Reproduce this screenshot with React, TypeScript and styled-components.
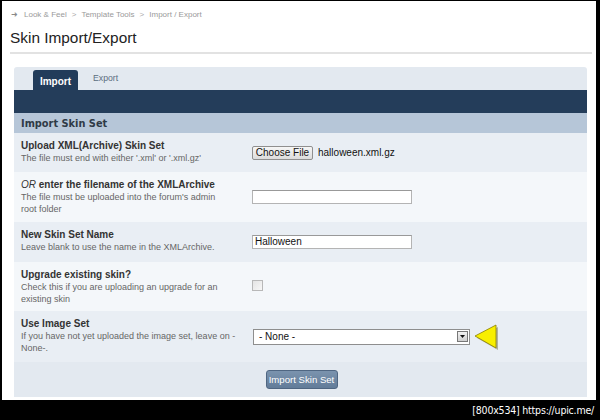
import React from "react";
import styled, { createGlobalStyle } from "styled-components";

const Global = createGlobalStyle`
  html, body { margin: 0; padding: 0; background: #000; }
  #root { width: 600px; height: 420px; }
`;

const Shot = styled.div`
  width: 600px;
  height: 420px;
  background: #000;
  display: flex;
  flex-direction: column;
  overflow: hidden;
`;

const Page = styled.div`
  margin: 1px 4px 0 2px;
  height: 399px;
  background: #fff;
  display: flex;
  flex-direction: column;
  font-family: "Liberation Sans", Arial, sans-serif;
`;

const Breadcrumb = styled.div`
  display: flex;
  align-items: center;
  gap: 5px;
  padding: 8px 0 0 9px;
  height: 10px;
  font-size: 8px;
  color: #9a9a9a;
`;

const Arrow = styled.span`
  font-size: 8px;
  color: #8a8a8a;
  margin-right: 1px;
`;

const Sep = styled.span`
  color: #aaa;
`;

const Title = styled.h1`
  margin: 10px 0 0 8px;
  font-size: 15.4px;
  font-weight: normal;
  color: #222;
  line-height: 18px;
`;

const Rule = styled.div`
  margin: 5px 4px 0 8px;
  height: 2px;
  background: #e2e2e2;
`;

const Panel = styled.div`
  margin: 13px 9px 0 12px;
  display: flex;
  flex-direction: column;
`;

const TabStrip = styled.div`
  height: 23px;
  background: #e3e9f0;
  border-radius: 3px 3px 0 0;
  display: flex;
  align-items: flex-end;
  padding-left: 19px;
`;

const ActiveTab = styled.div`
  width: 45px;
  height: 20px;
  background: #223c5a;
  border-radius: 3px 3px 0 0;
  color: #fff;
  font-weight: bold;
  font-size: 10px;
  display: flex;
  align-items: center;
  justify-content: center;
  padding-top: 2px;
  box-sizing: border-box;
`;

const Tab = styled.div`
  margin-left: 15px;
  height: 20px;
  font-size: 8.7px;
  color: #5b6d80;
  display: flex;
  align-items: center;
  padding-bottom: 5px;
  box-sizing: border-box;
`;

const DarkBar = styled.div`
  height: 23px;
  background: #243d5a;
`;

const SectionHeader = styled.div`
  height: 20px;
  background: #b6c6d8;
  padding-left: 7px;
  display: flex;
  align-items: center;
  font-family: "DejaVu Sans", Verdana, sans-serif;
  font-weight: bold;
  font-size: 9.8px;
  color: #2f3a46;
`;

const Row = styled.div<{ $alt?: boolean; $h: number }>`
  display: grid;
  grid-template-columns: 238px 1fr;
  height: ${(p) => p.$h}px;
  background: ${(p) => (p.$alt ? "#f4f7fa" : "#e9eef4")};
`;

const LabelCell = styled.div`
  padding: 7px 19px 0 7px;
  display: flex;
  flex-direction: column;
`;

const Label = styled.div`
  font-size: 10px;
  font-weight: bold;
  line-height: 12px;
  color: #333;
  em {
    font-weight: normal;
  }
`;

const Desc = styled.div`
  font-size: 9px;
  line-height: 12px;
  color: #666;
`;

const DescLine = styled.span`
  display: block;
  white-space: nowrap;
`;

const ControlCell = styled.div`
  display: flex;
  align-items: center;
`;

const FileButton = styled.button`
  height: 14px;
  width: 61px;
  padding: 0;
  border: 1px solid #8f8f8f;
  border-radius: 2px;
  background: linear-gradient(#f6f6f6, #dcdcdc);
  font-family: "Liberation Sans", Arial, sans-serif;
  font-size: 10px;
  color: #111;
  line-height: 12px;
`;

const FileName = styled.span`
  margin-left: 5px;
  font-size: 10px;
  color: #111;
`;

const TextBox = styled.div`
  width: 160px;
  height: 14px;
  box-sizing: border-box;
  border: 1px solid #b4b4b4;
  border-top-color: #999;
  background: #fff;
  font-size: 10px;
  line-height: 12px;
  padding-left: 2px;
  color: #111;
`;

const CheckBox = styled.div`
  width: 9px;
  height: 9px;
  margin-top: -2px;
  border: 1px solid #b8b8b8;
  background: linear-gradient(135deg, #e4e4e4, #f7f7f7);
`;

const Select = styled.div`
  width: 217px;
  height: 16px;
  box-sizing: border-box;
  border: 1px solid #8e8e8e;
  background: #fff;
  display: flex;
  align-items: center;
  justify-content: space-between;
  padding: 0 1px 0 5px;
  font-size: 10px;
  color: #111;
  margin-left: 1px;
`;

const DropButton = styled.div`
  width: 11px;
  height: 11px;
  box-sizing: border-box;
  border: 1px solid #777;
  background: linear-gradient(#f2f2f2, #cfcfcf);
  display: flex;
  align-items: center;
  justify-content: center;
`;

const Pointer = styled.svg`
  margin-left: 4px;
  margin-top: 2px;
`;

const Footer = styled.div`
  height: 35px;
  background: #e3e9f0;
  display: flex;
  align-items: center;
  justify-content: center;
`;

const SubmitButton = styled.button`
  width: 72px;
  height: 19px;
  padding: 0;
  margin-left: 2px;
  border: 1px solid #4f6682;
  border-radius: 3px;
  background: linear-gradient(#7b93ae, #627c99);
  color: #fff;
  font-family: "Liberation Sans", Arial, sans-serif;
  font-size: 9.6px;
`;

const Caption = styled.div`
  flex: 1;
  display: flex;
  align-items: center;
  justify-content: flex-end;
  padding-right: 6px;
  color: #fff;
  font-family: "DejaVu Sans", sans-serif;
  font-stretch: condensed;
  font-size: 10.5px;
  letter-spacing: -0.2px;
`;

export default function App() {
  return (
    <>
      <Global />
      <Shot>
        <Page>
          <Breadcrumb>
            <Arrow>➜</Arrow>
            <span>Look &amp; Feel</span>
            <Sep>&gt;</Sep>
            <span>Template Tools</span>
            <Sep>&gt;</Sep>
            <span>Import / Export</span>
          </Breadcrumb>
          <Title>Skin Import/Export</Title>
          <Rule />
          <Panel>
            <TabStrip>
              <ActiveTab>Import</ActiveTab>
              <Tab>Export</Tab>
            </TabStrip>
            <DarkBar />
            <SectionHeader>Import Skin Set</SectionHeader>
            <Row $h={39}>
              <LabelCell>
                <Label>Upload XML(Archive) Skin Set</Label>
                <Desc>The file must end with either '.xml' or '.xml.gz'</Desc>
              </LabelCell>
              <ControlCell>
                <FileButton>Choose File</FileButton>
                <FileName>halloween.xml.gz</FileName>
              </ControlCell>
            </Row>
            <Row $alt $h={50}>
              <LabelCell>
                <Label>
                  <em>OR</em> enter the filename of the XMLArchive
                </Label>
                <Desc>The file must be uploaded into the forum's admin root folder</Desc>
              </LabelCell>
              <ControlCell>
                <TextBox />
              </ControlCell>
            </Row>
            <Row $h={40}>
              <LabelCell>
                <Label>New Skin Set Name</Label>
                <Desc>Leave blank to use the name in the XMLArchive.</Desc>
              </LabelCell>
              <ControlCell>
                <TextBox>Halloween</TextBox>
              </ControlCell>
            </Row>
            <Row $alt $h={49}>
              <LabelCell>
                <Label>Upgrade existing skin?</Label>
                <Desc>Check this if you are uploading an upgrade for an existing skin</Desc>
              </LabelCell>
              <ControlCell>
                <CheckBox />
              </ControlCell>
            </Row>
            <Row $h={51}>
              <LabelCell>
                <Label>Use Image Set</Label>
                <Desc>
                  <DescLine>If you have not yet uploaded the image set, leave on -</DescLine>
                  <DescLine>None-.</DescLine>
                </Desc>
              </LabelCell>
              <ControlCell>
                <Select>
                  <span>- None -</span>
                  <DropButton>
                    <svg width="5" height="3" viewBox="0 0 5 3">
                      <polygon points="0,0 5,0 2.5,3" fill="#111" />
                    </svg>
                  </DropButton>
                </Select>
                <Pointer width="28" height="27" viewBox="0 0 28 27">
                  <polygon points="3,14 24,3 24,26" fill="#6a6a3a" opacity="0.45" />
                  <polygon points="1,12 22,1 22,24" fill="#f8ef00" stroke="#8a7d00" strokeWidth="0.8" />
                </Pointer>
              </ControlCell>
            </Row>
            <Footer>
              <SubmitButton>Import Skin Set</SubmitButton>
            </Footer>
          </Panel>
        </Page>
        <Caption>[800x534] https://upic.me/</Caption>
      </Shot>
    </>
  );
}
